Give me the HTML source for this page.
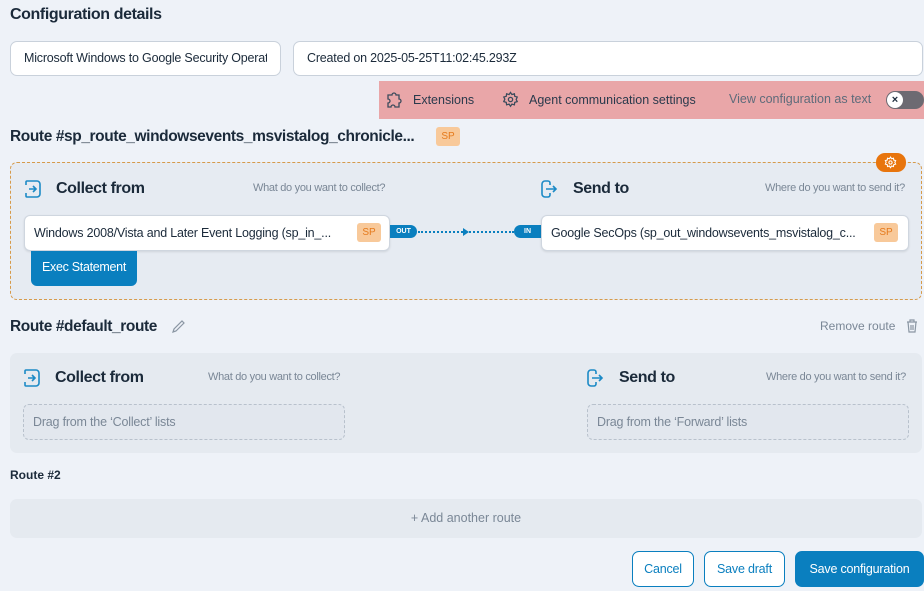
<!DOCTYPE html>
<html><head><meta charset="utf-8"><style>
*{box-sizing:border-box;margin:0;padding:0}
body{width:924px;height:591px;background:#eef2f8;font-family:"Liberation Sans",sans-serif;position:relative;overflow:hidden;color:#1b2a3a}
.a{position:absolute}
.inp{position:absolute;background:#fff;border:1px solid #c9d1db;border-radius:7px;font-size:12.5px;padding:0 13px;line-height:33px;white-space:nowrap;letter-spacing:-.2px}
.inp span{display:block;overflow:hidden}
.h{font-weight:bold;font-size:16px;letter-spacing:-.4px}
.hint{font-size:11px;color:#7a8796;letter-spacing:-.3px}
.sp{position:absolute;background:#f8c99a;color:#e57a1c;font-size:10px;border-radius:3px;width:24px;height:19px;text-align:center;line-height:19px}
.card{position:absolute;background:#fff;border:1px solid #cfd6df;border-radius:6px;height:36px;font-size:12.5px;line-height:34px;padding-left:9px;letter-spacing:-.2px;white-space:nowrap;box-shadow:0 1px 2px rgba(0,0,0,.1)}
.drop{position:absolute;border:1px dashed #b8c1cc;border-radius:6px;background:#e2e7ee;height:36px;font-size:12.5px;color:#7a8796;line-height:34px;padding-left:9px;letter-spacing:-.2px}
.btn{position:absolute;border:1px solid #0a7fbf;border-radius:7px;height:36px;line-height:34px;text-align:center;font-size:12.5px;color:#0a7fbf;background:#fff;letter-spacing:-.2px}
</style></head><body>
<div class="a h" style="left:10px;top:6px;font-size:16px">Configuration details</div>
<div class="inp" style="left:10px;top:41px;width:271px;height:35px"><span>Microsoft Windows to Google Security Operations</span></div>
<div class="inp" style="left:293px;top:41px;width:630px;height:35px"><span>Created on 2025-05-25T11:02:45.293Z</span></div>
<div class="a" style="left:379px;top:81px;width:545px;height:38px;background:#e9a6a8"></div>
<svg class="a" style="left:386px;top:91px" width="16" height="18" viewBox="0 0 16 18" fill="none" stroke="#3b4b5c" stroke-width="1.3"><path d="M2 4h4a2 2 0 0 1 4 0h3v4a2 2 0 0 1 0 4v4h-4a2 2 0 0 0-4 0H2v-4a2 2 0 0 0 0-4z"/></svg>
<div class="a" style="left:413px;top:93px;font-size:12.5px;color:#2a3a4c">Extensions</div>
<svg class="a" style="left:502px;top:91px" width="17" height="17" viewBox="0 0 24 24" fill="none" stroke="#3b4b5c" stroke-width="1.8"><circle cx="12" cy="12" r="3"/><path d="M12 2l2 3 3.5-1 .5 3.5 3.5 1-1.5 3.5 1.5 3-3.5 1-.5 3.5-3.5-1-2 3-2-3-3.5 1-.5-3.5-3.5-1 1.5-3.5L2.5 8.5l3.5-1L6.5 4 10 5z"/></svg>
<div class="a" style="left:529px;top:93px;font-size:12.5px;color:#2a3a4c">Agent communication settings</div>
<div class="a" style="left:729px;top:92px;font-size:12.5px;color:#5e6b7a">View configuration as text</div>
<div class="a" style="left:886px;top:91px;width:38px;height:18px;border-radius:9px;background:#6d6a72"></div>
<div class="a" style="left:887px;top:92px;width:16px;height:16px;border-radius:50%;background:#fff;font-size:11px;text-align:center;line-height:16px;font-weight:bold">×</div>
<div class="a h" style="left:10px;top:128px;font-size:15.5px">Route #sp_route_windowsevents_msvistalog_chronicle...</div>
<div class="sp" style="left:436px;top:127px">SP</div>
<div class="a" style="left:10px;top:162px;width:912px;height:138px;border:1px dashed #d69a4a;border-radius:7px;background:#e6ebf2"></div>
<div class="a" style="left:876px;top:153px;width:30px;height:19px;border-radius:9px;background:#e8750d"></div>
<svg class="a" style="left:884px;top:156px" width="13" height="13" viewBox="0 0 24 24" fill="none" stroke="#fff" stroke-width="2"><circle cx="12" cy="12" r="3"/><path d="M12 2l2 3 3.5-1 .5 3.5 3.5 1-1.5 3.5 1.5 3-3.5 1-.5 3.5-3.5-1-2 3-2-3-3.5 1-.5-3.5-3.5-1 1.5-3.5L2.5 8.5l3.5-1L6.5 4 10 5z"/></svg>
<svg class="a" style="left:24px;top:179px" width="18" height="20" viewBox="0 0 18 20" fill="none" stroke="#1c8ac6" stroke-width="1.6"><path d="M2 6V3a1 1 0 0 1 1-1h10a3 3 0 0 1 3 3v10a3 3 0 0 1-3 3H3a1 1 0 0 1-1-1v-3M5 10h7M9 7l3 3-3 3"/></svg>
<div class="a h" style="left:56px;top:180px">Collect from</div>
<div class="a hint" style="left:253px;top:182px">What do you want to collect?</div>
<svg class="a" style="left:540px;top:179px" width="18" height="20" viewBox="0 0 18 20" fill="none" stroke="#1c8ac6" stroke-width="1.6"><path d="M10 6V4a2 2 0 0 0-2-2H5a3 3 0 0 0-3 3v10a3 3 0 0 0 3 3h3a2 2 0 0 0 2-2v-2M6 10h10M13 7l3 3-3 3"/></svg>
<div class="a h" style="left:573px;top:180px">Send to</div>
<div class="a hint" style="left:765px;top:182px">Where do you want to send it?</div>
<div class="card" style="left:24px;top:215px;width:366px">Windows 2008/Vista and Later Event Logging (sp_in_...</div>
<div class="sp" style="left:357px;top:223px">SP</div>
<div class="a" style="left:390px;top:225px;width:27px;height:13px;border-radius:0 7px 7px 0;background:#0a7fbf;color:#fff;font-size:7px;font-weight:bold;line-height:13px;text-align:center">OUT</div>
<div class="a" style="left:418px;top:231px;width:96px;border-top:2px dotted #0a7fbf"></div>
<div class="a" style="left:463px;top:228px;width:0;height:0;border-left:6px solid #0a7fbf;border-top:4px solid transparent;border-bottom:4px solid transparent"></div>
<div class="a" style="left:514px;top:225px;width:27px;height:13px;border-radius:7px 0 0 7px;background:#0a7fbf;color:#fff;font-size:7px;font-weight:bold;line-height:13px;text-align:center">IN</div>
<div class="card" style="left:541px;top:215px;width:368px">Google SecOps (sp_out_windowsevents_msvistalog_c...</div>
<div class="sp" style="left:874px;top:223px">SP</div>
<div class="a" style="left:31px;top:251px;width:106px;height:35px;background:#0a7fbf;border-radius:0 0 6px 6px;color:#fff;font-size:12.5px;line-height:33px;text-align:center;letter-spacing:-.3px">Exec Statement</div>
<div class="a h" style="left:10px;top:318px;font-size:15.5px">Route #default_route</div>
<svg class="a" style="left:171px;top:319px" width="14" height="15" viewBox="0 0 14 15" fill="none" stroke="#8a96a3" stroke-width="1.2"><path d="M2 13l1-3 8-8 2 2-8 8z"/></svg>
<div class="a" style="left:820px;top:319px;font-size:12px;color:#7a8796">Remove route</div>
<svg class="a" style="left:906px;top:319px" width="12" height="14" viewBox="0 0 12 14" fill="none" stroke="#8a96a3" stroke-width="1.2"><path d="M1 3h10M4 3V1h4v2M2 3l1 10h6l1-10M5 6v5M7 6v5"/></svg>
<div class="a" style="left:10px;top:353px;width:912px;height:100px;border-radius:7px;background:#e5eaf0"></div>
<svg class="a" style="left:23px;top:368px" width="18" height="20" viewBox="0 0 18 20" fill="none" stroke="#1c8ac6" stroke-width="1.6"><path d="M2 6V3a1 1 0 0 1 1-1h10a3 3 0 0 1 3 3v10a3 3 0 0 1-3 3H3a1 1 0 0 1-1-1v-3M5 10h7M9 7l3 3-3 3"/></svg>
<div class="a h" style="left:55px;top:369px">Collect from</div>
<div class="a hint" style="left:208px;top:371px">What do you want to collect?</div>
<svg class="a" style="left:586px;top:368px" width="18" height="20" viewBox="0 0 18 20" fill="none" stroke="#1c8ac6" stroke-width="1.6"><path d="M10 6V4a2 2 0 0 0-2-2H5a3 3 0 0 0-3 3v10a3 3 0 0 0 3 3h3a2 2 0 0 0 2-2v-2M6 10h10M13 7l3 3-3 3"/></svg>
<div class="a h" style="left:619px;top:369px">Send to</div>
<div class="a hint" style="left:766px;top:371px">Where do you want to send it?</div>
<div class="drop" style="left:23px;top:404px;width:322px">Drag from the ‘Collect’ lists</div>
<div class="drop" style="left:587px;top:404px;width:322px">Drag from the ‘Forward’ lists</div>
<div class="a" style="left:10px;top:468px;font-size:12px;font-weight:bold">Route #2</div>
<div class="a" style="left:10px;top:499px;width:912px;height:39px;border-radius:7px;background:#e5eaf0;text-align:center;line-height:39px;font-size:12.5px;color:#7a8796">+ Add another route</div>
<div class="btn" style="left:632px;top:551px;width:62px">Cancel</div>
<div class="btn" style="left:704px;top:551px;width:81px">Save draft</div>
<div class="btn" style="left:795px;top:551px;width:129px;background:#0a7fbf;color:#fff">Save configuration</div>
</body></html>
